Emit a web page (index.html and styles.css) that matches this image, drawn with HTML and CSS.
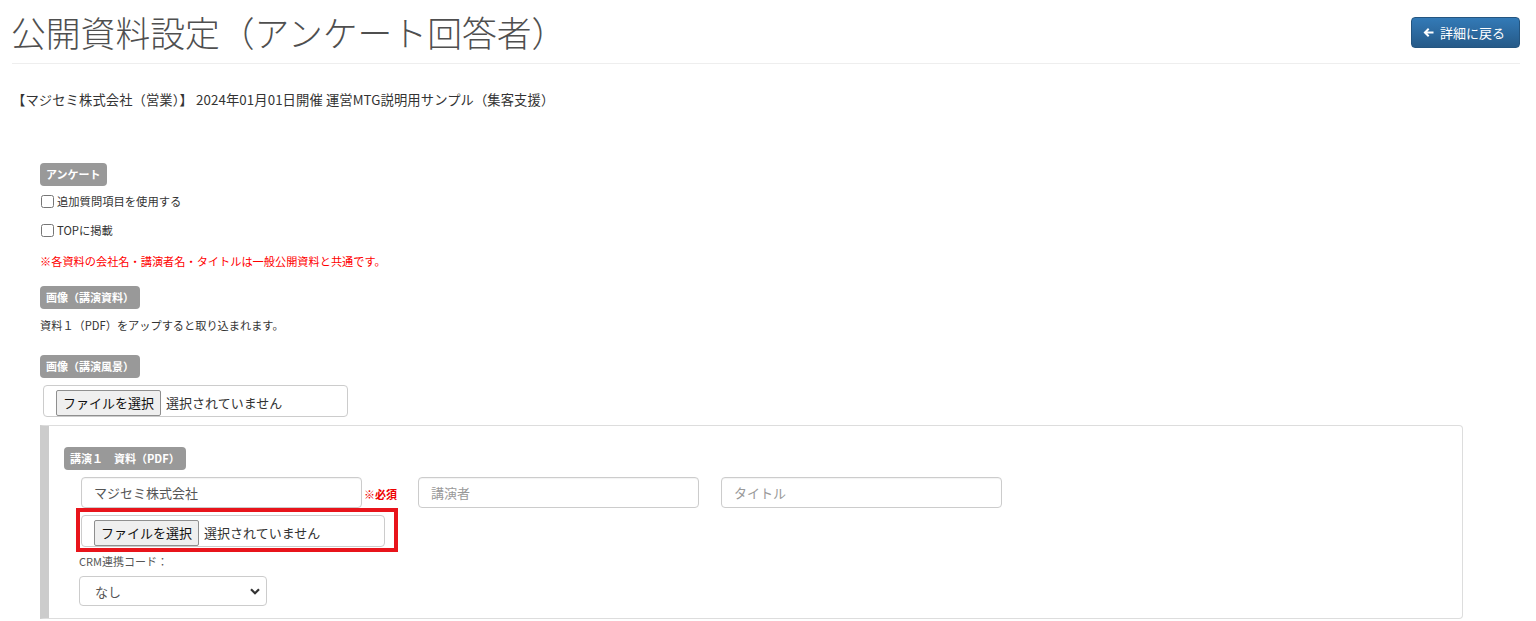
FILE: index.html
```html
<!DOCTYPE html>
<html lang="ja">
<head>
    <meta charset="UTF-8">
    <meta name="viewport" content="width=device-width, initial-scale=1.0">
    <title>公開資料設定（アンケート回答者）</title>

    <link rel="stylesheet" href="styles.css">
</head>
<body>
    <div class="page-header">
        <h1 class="title">公開資料設定（アンケート回答者）</h1>
        <a class="btn-back" href="#">
            <svg class="icon-arrow" width="11" height="11" viewBox="0 0 11 11"><path d="M0.5 5.5 L5 1 L6.4 2.4 L4.3 4.5 L10.5 4.5 L10.5 6.5 L4.3 6.5 L6.4 8.6 L5 10 Z" fill="#fff"/></svg>
            詳細に戻る
        </a>
    </div>

    <p class="seminar-name">【マジセミ株式会社（営業）】 2024年01月01日開催 運営MTG説明用サンプル（集客支援）</p>

    <div class="form-area">
        <div class="row-badge first"><span class="badge">アンケート</span></div>

        <label class="check-row cr1"><input type="checkbox"> 追加質問項目を使用する</label>
        <label class="check-row cr2"><input type="checkbox"> TOPに掲載</label>

        <p class="note-red">※各資料の会社名・講演者名・タイトルは一般公開資料と共通です。</p>

        <div class="row-badge second"><span class="badge">画像（講演資料）</span></div>
        <p class="help">資料１（PDF）をアップすると取り込まれます。</p>

        <div class="row-badge third"><span class="badge">画像（講演風景）</span></div>
        <div class="file-box top-file">
            <span class="file-btn">ファイルを選択</span>
            <span class="file-status">選択されていません</span>
        </div>

        <div class="lecture-panel">
            <div class="row-badge"><span class="badge">講演１　資料（PDF）</span></div>

            <div class="field-row">
                <div class="text-input company">マジセミ株式会社</div>
                <span class="required">※必須</span>
                <div class="text-input speaker placeholder">講演者</div>
                <div class="text-input doc-title placeholder">タイトル</div>
            </div>

            <div class="highlight">
                <div class="file-box">
                    <span class="file-btn">ファイルを選択</span>
                    <span class="file-status">選択されていません</span>
                </div>
            </div>

            <div class="crm-label">CRM連携コード：</div>
            <div class="select-box">
                <span>なし</span>
                <svg width="10" height="7" viewBox="0 0 10 7"><path d="M1 1.2 L5 5.2 L9 1.2" fill="none" stroke="#333" stroke-width="2.2"/></svg>
            </div>
        </div>
    </div>
</body>
</html>
```

FILE: styles.css
```css
body{
    margin:0;
    font-family:"Noto Sans CJK JP", "Noto Sans", sans-serif;
    color:#333;
    background:#fff;
}
div.page-header{
    display:flex;
    justify-content:space-between;
    align-items:center;
    height:63px;
    margin:0 16px 0 12px;
    border-bottom:1px solid #eee;
}
h1.title{
    margin:0 0 0 -1px;
    font-size:34.8px;
    font-weight:300;
    color:#4f4f4f;
    line-height:40px;
}
a.btn-back{
    display:flex;
    align-items:center;
    gap:6px;
    box-sizing:border-box;
    width:109px;
    height:31px;
    padding:0 0 0 11px;
    margin-top:1px;
    border:1px solid #245580;
    border-radius:4px;
    background-image:linear-gradient(#337ab7, #265a88);
    color:#fff;
    font-size:13px;
    text-decoration:none;
}
p.seminar-name{
    margin:26px 0 0 12px;
    font-size:13.3px;
    line-height:20px;
    letter-spacing:0.1px;
}
div.form-area{
    padding:0 40px;
}
div.row-badge{
    display:flex;
    height:23px;
}
div.row-badge.first{
    margin-top:53px;
}
div.row-badge.second{
    margin-top:17px;
}
div.row-badge.third{
    margin-top:22px;
}
span.badge{
    display:inline-block;
    height:23px;
    line-height:23px;
    padding:0 6px;
    border-radius:4px;
    background:#999;
    color:#fff;
    font-size:11px;
    font-weight:700;
}
label.check-row{
    display:flex;
    align-items:center;
    height:16px;
    font-size:11.3px;
}
label.check-row input{
    width:13px;
    height:13px;
    margin:0 3px 0 1px;
}
label.cr1{
    margin-top:7px;
}
label.cr2{
    margin-top:13px;
}
p.note-red{
    margin:15px 0 0;
    height:16px;
    line-height:16px;
    font-size:11.2px;
    color:#f00;
}
p.help{
    margin:8px 0 0;
    height:16px;
    line-height:16px;
    font-size:11.2px;
}
div.file-box{
    display:flex;
    align-items:flex-end;
    gap:5px;
    box-sizing:border-box;
    width:304px;
    height:32px;
    padding-left:12px;
    border:1px solid #ccc;
    border-radius:4px;
    background:#fff;
    font-size:13px;
}
div.top-file{
    margin:7px 0 0 3px;
    width:305px;
}
span.file-btn{
    box-sizing:border-box;
    height:26px;
    line-height:24px;
    padding:0 6px;
    border:1px solid #8f8f8f;
    border-radius:2px;
    background:#efefef;
    color:#111;
}
span.file-status{
    line-height:26px;
    color:#333;
}
div.lecture-panel{
    box-sizing:border-box;
    width:1423px;
    height:194px;
    margin-top:8px;
    padding:21px 0 0 15px;
    border:1px solid #ddd;
    border-left:9px solid #ccc;
    border-radius:0 4px 4px 0;
}
div.field-row{
    display:flex;
    align-items:center;
    margin:7px 0 0 17px;
    height:31px;
}
div.text-input{
    box-sizing:border-box;
    height:31px;
    line-height:29px;
    padding-left:12px;
    border:1px solid #ccc;
    border-radius:4px;
    font-size:13px;
    color:#555;
    box-shadow:inset 0 1px 1px rgba(0,0,0,.05);
}
div.text-input.placeholder{
    color:#999;
}
div.company{
    width:281px;
}
span.required{
    width:36px;
    margin-left:2px;
    padding-top:2px;
    font-size:11px;
    font-weight:700;
    color:#e00;
}
div.speaker{
    width:281px;
    margin-left:18px;
}
div.doc-title{
    width:281px;
    margin-left:22px;
}
div.highlight{
    box-sizing:border-box;
    width:322px;
    height:44px;
    margin-left:12px;
    padding:3px 0 0 1px;
    border:4px solid #e8141b;
}
div.crm-label{
    margin:2px 0 0 15px;
    height:14px;
    line-height:14px;
    font-size:11px;
    color:#555;
}
div.select-box{
    display:flex;
    justify-content:space-between;
    align-items:center;
    box-sizing:border-box;
    width:188px;
    height:30px;
    margin:8px 0 0 15px;
    padding:0 6px 0 15px;
    border:1px solid #ccc;
    border-radius:4px;
    font-size:13px;
    color:#555;
}
```
